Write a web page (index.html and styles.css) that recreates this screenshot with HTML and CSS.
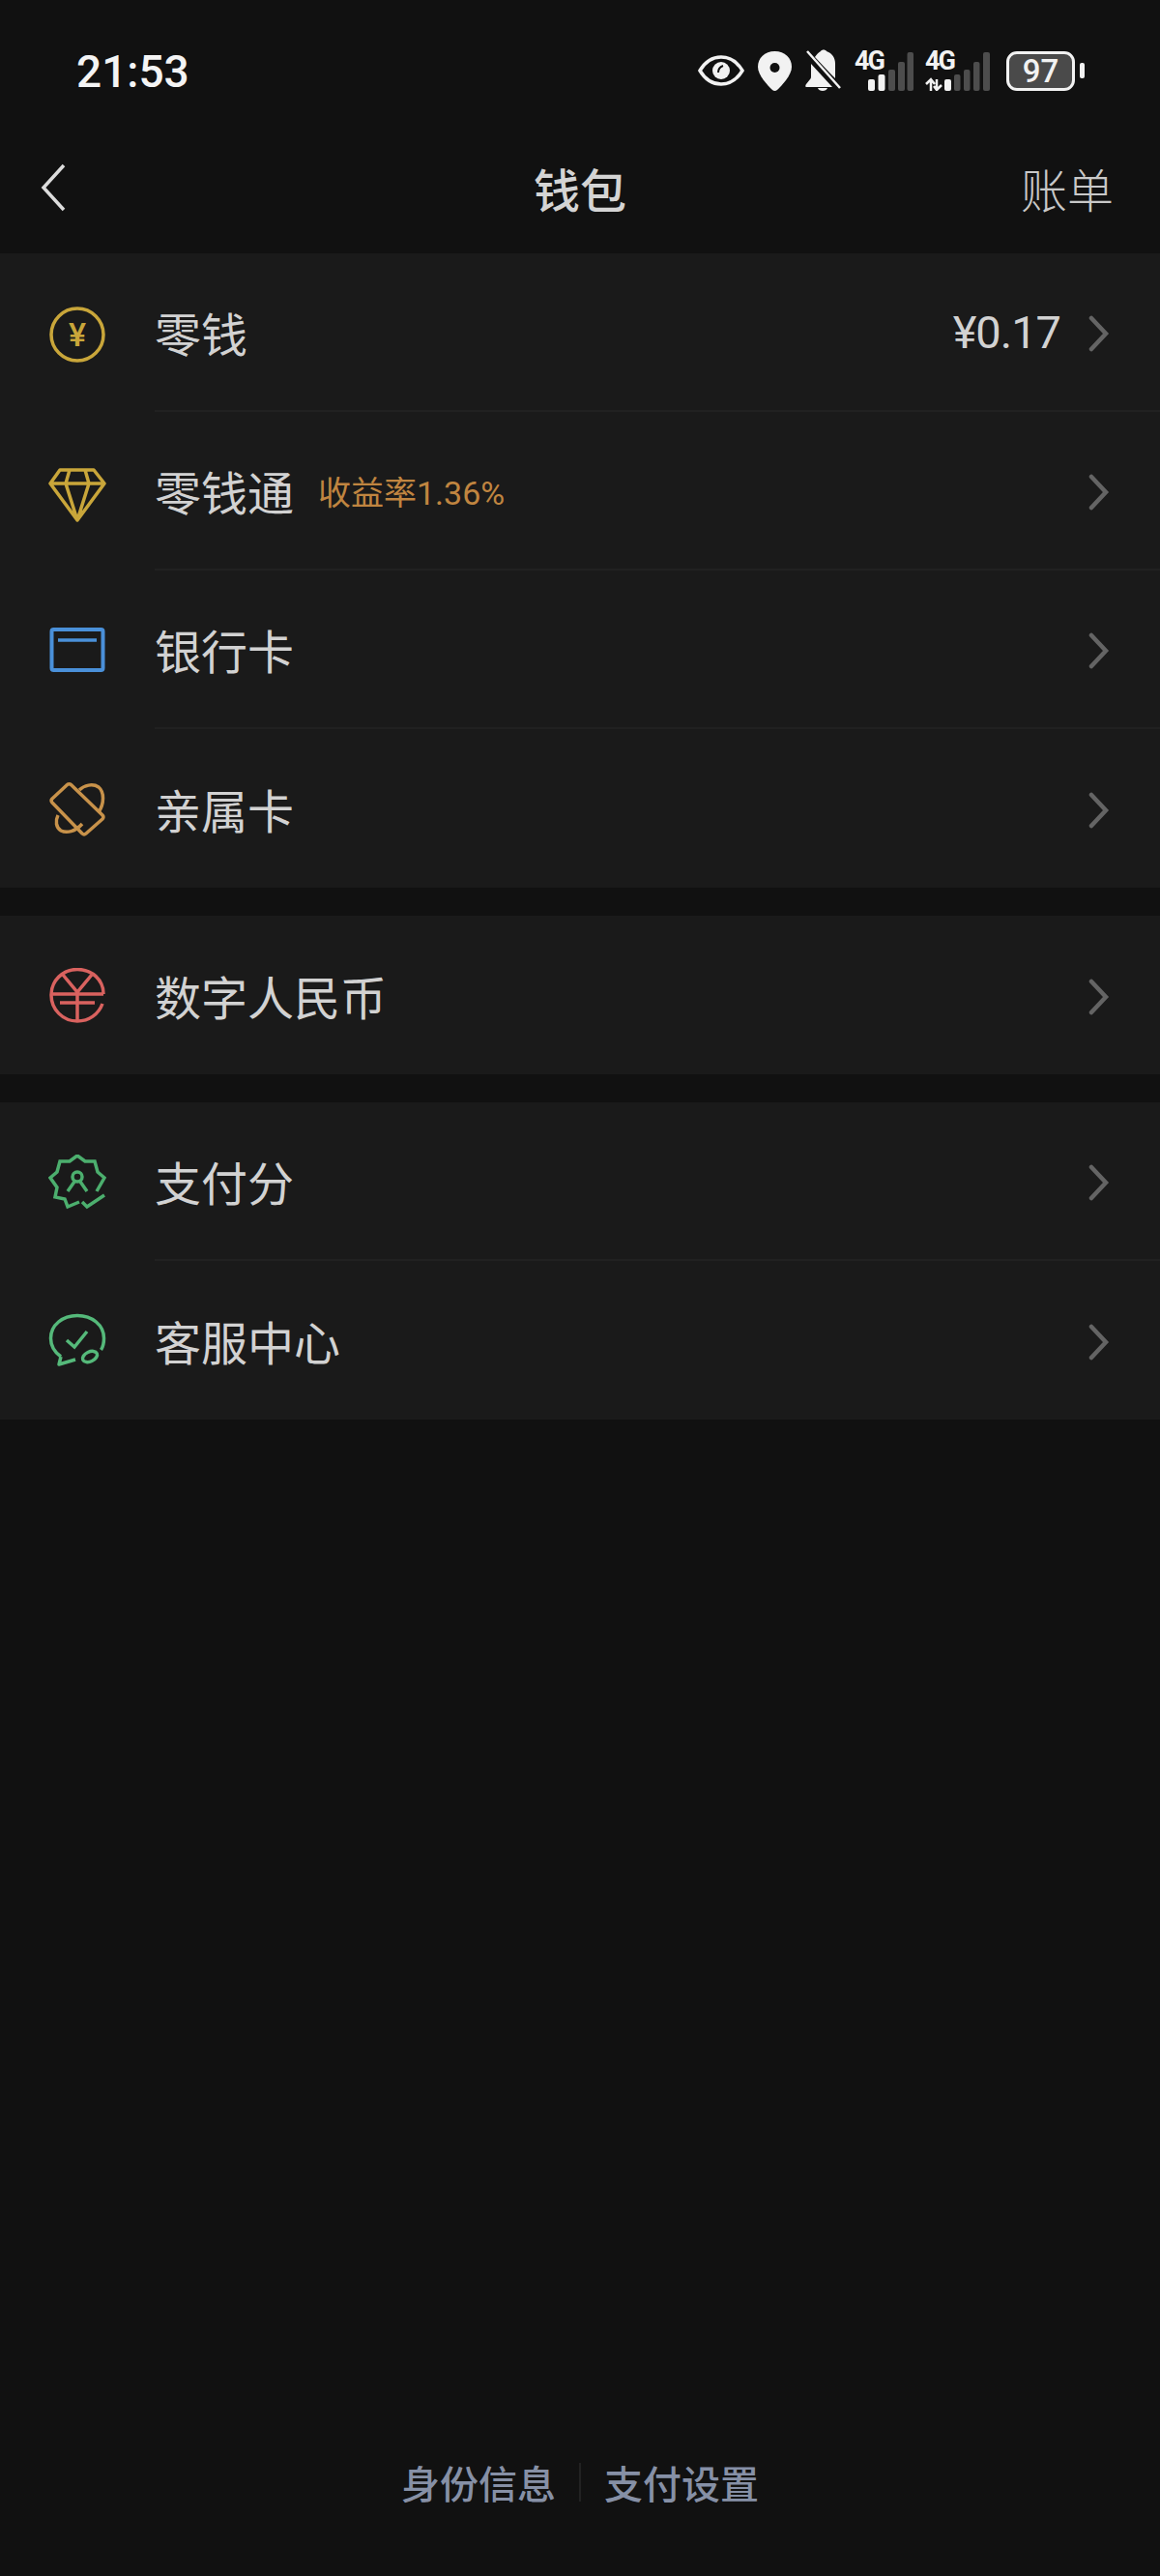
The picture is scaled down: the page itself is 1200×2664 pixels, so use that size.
FILE: index.html
```html
<!DOCTYPE html>
<html lang="zh-CN">
<head>
  <meta charset="UTF-8">
  <title>钱包</title>
  <link rel="stylesheet" href="styles.css">
</head>
<body>
  <div class="page">
    <div class="status-bar">
      <span class="time">21:53</span>
      <div class="status-icons">
        <svg width="48" height="32" viewBox="0 0 48 32"><path d="M2 16C8 6 16 2 24 2s16 4 22 14c-6 10-14 14-22 14S8 26 2 16z" fill="none" stroke="#f2f2f2" stroke-width="3.500"/><circle cx="24" cy="16" r="9" fill="#f2f2f2"/><path d="M21 18c0-4 2-6 5-7" fill="none" stroke="#111" stroke-width="2"/></svg>
        <svg width="35" height="41" viewBox="0 0 35 41"><path d="M17.500 0C7 0 0 7 0 16c0 9 10 19 15 24 1.500 1.300 3.500 1.300 5 0 5-5 15-15 15-24C35 7 28 0 17.500 0z" fill="#f2f2f2"/><circle cx="17.500" cy="17" r="5" fill="#111"/></svg>
        <svg width="37" height="44" viewBox="0 0 37 44"><path d="M16 2c1-2 5-2 6 0 6 2 9 7 9 13v15l-6-6L10 8c2-3 4-5 6-6zM6 15l22 24H1c-1 0-1-2 0-3l4-5c1-1 1-2 1-4zM13 40h10c-1 4-9 4-10 0z" fill="#f2f2f2"/><path d="M2 2l34 38" stroke="#f2f2f2" stroke-width="2.500"/></svg>
        <div class="signal">
          <span class="net-label">4G</span>
          <svg width="61" height="41" viewBox="0 0 61 41"><rect x="14" y="29" width="7" height="12" rx="2" fill="#f2f2f2"/><rect x="24.500" y="24" width="7" height="17" rx="2" fill="#f2f2f2"/><rect x="35" y="19" width="7" height="22" rx="2" fill="#4d4d4d"/><rect x="45" y="11" width="7" height="30" rx="2" fill="#4d4d4d"/><rect x="54.500" y="1" width="6.500" height="40" rx="2" fill="#4d4d4d"/></svg>
        </div>
        <div class="signal signal-data">
          <span class="net-label">4G</span>
          <svg width="67" height="41" viewBox="0 0 67 41"><path d="M6 41V29M1 34l5-5 4 5M12 29v11M9 36l3 4 5-5" fill="none" stroke="#f2f2f2" stroke-width="2.500"/><rect x="20" y="29" width="7" height="12" rx="2" fill="#f2f2f2"/><rect x="30" y="24" width="6.500" height="17" rx="2" fill="#4d4d4d"/><rect x="40" y="19" width="6.500" height="22" rx="2" fill="#4d4d4d"/><rect x="50" y="11" width="6.500" height="30" rx="2" fill="#4d4d4d"/><rect x="60" y="1" width="7" height="40" rx="2" fill="#4d4d4d"/></svg>
        </div>
        <div class="battery">
          <span class="battery-level">97</span>
          <span class="battery-cap"></span>
        </div>
      </div>
    </div>

    <div class="nav-bar">
      <svg class="back" width="26" height="50" viewBox="0 0 26 50"><path d="M24 2L3 25l21 23" fill="none" stroke="#dcdcdc" stroke-width="3.500"/></svg>
      <span class="nav-title">钱包</span>
      <span class="nav-action">账单</span>
    </div>

    <div class="group">
      <div class="row">
        <svg class="row-icon" viewBox="0 0 60 60"><circle cx="30" cy="30" r="27" fill="none" stroke="#c9a63a" stroke-width="3.500"/><text class="yen" x="30" y="42" text-anchor="middle">¥</text></svg>
        <div class="row-main"><span class="row-label">零钱</span><span class="row-value">¥0.17</span><svg class="chevron" viewBox="0 0 22 38"><path d="M3 3l15 16L3 35" fill="none" stroke="#646464" stroke-width="4.500" stroke-linecap="round"/></svg></div>
      </div>
      <div class="row">
        <svg class="row-icon" viewBox="0 0 60 60"><path d="M12 6h35l11 14-28 38L2 20zM2 20h56M22 6l-4 14 12 38 12-38-4-14" fill="none" stroke="#c9a63a" stroke-width="3.500" stroke-linejoin="round"/></svg>
        <div class="row-main"><span class="row-label">零钱通</span><span class="row-note">收益率1.36%</span><svg class="chevron" viewBox="0 0 22 38"><path d="M3 3l15 16L3 35" fill="none" stroke="#646464" stroke-width="4.500" stroke-linecap="round"/></svg></div>
      </div>
      <div class="row">
        <svg class="row-icon" viewBox="0 0 60 60"><rect x="3.500" y="7" width="53" height="42" rx="2" fill="none" stroke="#4a90d9" stroke-width="4"/><path d="M10 18h40" stroke="#4a90d9" stroke-width="3.500"/></svg>
        <div class="row-main"><span class="row-label">银行卡</span><svg class="chevron" viewBox="0 0 22 38"><path d="M3 3l15 16L3 35" fill="none" stroke="#646464" stroke-width="4.500" stroke-linecap="round"/></svg></div>
      </div>
      <div class="row">
        <svg class="row-icon" viewBox="0 0 60 60"><path d="M19 4a3 3 0 0 1 5 0l32 31a3 3 0 0 1 0 4L39 54a3 3 0 0 1-4 0L4 22a3 3 0 0 1 0-4z" fill="none" stroke="#c8924a" stroke-width="3.500" stroke-linejoin="round"/><path d="M32 9c5-5 14-7 20-3 6 5 6 17 0 26M10 35c-3 6-2 13 3 16 6 3 15 1 22-7" fill="none" stroke="#c8924a" stroke-width="3.500"/></svg>
        <div class="row-main"><span class="row-label">亲属卡</span><svg class="chevron" viewBox="0 0 22 38"><path d="M3 3l15 16L3 35" fill="none" stroke="#646464" stroke-width="4.500" stroke-linecap="round"/></svg></div>
      </div>
    </div>

    <div class="group">
      <div class="row">
        <svg class="row-icon" viewBox="0 0 60 60"><path d="M57 27C57 12 45 1.500 30 1.500S3 13 3 28s12 27 27 27c12 0 22-7 26-18" fill="none" stroke="#d9625f" stroke-width="3.500"/><path d="M15 7l15 18L45 7M3 27h54M12 36h36M30 25v30" fill="none" stroke="#d9625f" stroke-width="3.500"/></svg>
        <div class="row-main"><span class="row-label">数字人民币</span><svg class="chevron" viewBox="0 0 22 38"><path d="M3 3l15 16L3 35" fill="none" stroke="#646464" stroke-width="4.500" stroke-linecap="round"/></svg></div>
      </div>
    </div>

    <div class="group">
      <div class="row">
        <svg class="row-icon" viewBox="0 0 60 60"><path d="M50 38l8-14-7-6-3-11H38L30 1l-8 6H12L9 18 2 24l7 10-2 10 10 2 3 8 12-5" fill="none" stroke="#4caf6e" stroke-width="3.500"/><circle cx="30" cy="23" r="5" fill="none" stroke="#4caf6e" stroke-width="3.500"/><path d="M20 38l7-10M40 38l-7-10M35 49l5 5 18-12" fill="none" stroke="#4caf6e" stroke-width="3.500"/></svg>
        <div class="row-main"><span class="row-label">支付分</span><svg class="chevron" viewBox="0 0 22 38"><path d="M3 3l15 16L3 35" fill="none" stroke="#646464" stroke-width="4.500" stroke-linecap="round"/></svg></div>
      </div>
      <div class="row">
        <svg class="row-icon" viewBox="0 0 60 60"><path d="M13 45C6 40 2.500 33 2.500 26 2.500 12 15 2.500 30 2.500S57.500 12 57.500 26c0 5-1 9-3 12M13 45l-2 8 17-5" fill="none" stroke="#55b97a" stroke-width="3.500" stroke-linejoin="round"/><ellipse cx="43" cy="45" rx="8" ry="5" transform="rotate(-25 43 45)" fill="none" stroke="#55b97a" stroke-width="3.500"/><path d="M19 28l8 7 13-16" fill="none" stroke="#55b97a" stroke-width="3.500"/></svg>
        <div class="row-main"><span class="row-label">客服中心</span><svg class="chevron" viewBox="0 0 22 38"><path d="M3 3l15 16L3 35" fill="none" stroke="#646464" stroke-width="4.500" stroke-linecap="round"/></svg></div>
      </div>
    </div>

    <div class="footer">
      <span class="footer-link">身份信息</span>
      <span class="footer-sep"></span>
      <span class="footer-link">支付设置</span>
    </div>
  </div>
</body>
</html>
```

FILE: styles.css
```css
* {
  box-sizing: border-box;
}
body {
  margin: 0;
  background: #111111;
  font-family: "Noto Sans CJK SC", "Noto Sans", sans-serif;
}
.page {
  height: 2664px;
  display: flex;
  flex-direction: column;
  overflow: hidden;
}
.status-bar {
  height: 130px;
  padding: 18px 78px 0 79px;
  display: flex;
  justify-content: space-between;
  align-items: center;
}
.time {
  font-family: Roboto, sans-serif;
  font-size: 46px;
  font-weight: 500;
  letter-spacing: 0;
  color: #f4f4f4;
}
.status-icons {
  display: flex;
  align-items: center;
  gap: 14px;
  margin-top: -2px;
}
.signal {
  position: relative;
  height: 41px;
}
.signal svg {
  display: block;
}
.signal-data {
  margin-left: -2px;
}
.net-label {
  position: absolute;
  left: 0;
  top: -3px;
  font-family: Roboto, sans-serif;
  font-size: 27px;
  line-height: 27px;
  font-weight: 700;
  letter-spacing: -2px;
  color: #f2f2f2;
}
.battery {
  margin-left: 3px;
  display: flex;
  align-items: center;
  gap: 5px;
}
.battery-level {
  width: 71px;
  height: 41px;
  border: 3px solid #f2f2f2;
  border-radius: 11px;
  background: #4a4a4a;
  text-align: center;
  font-family: Roboto, sans-serif;
  font-size: 33px;
  line-height: 35px;
  font-weight: 500;
  color: #f2f2f2;
}
.battery-cap {
  width: 5px;
  height: 16px;
  border-radius: 2px;
  background: #f2f2f2;
}
.nav-bar {
  height: 132px;
  padding: 0 48px 5px 42px;
  display: flex;
  justify-content: space-between;
  align-items: center;
  position: relative;
}
.nav-title {
  position: absolute;
  left: 0;
  right: 0;
  text-align: center;
  font-size: 48px;
  font-weight: 500;
  color: #d4d4d4;
}
.nav-action {
  font-size: 48px;
  color: #c8c8c8;
  font-weight: 300;
}
.group {
  background: #1a1a1a;
  margin-bottom: 29px;
}
.row {
  height: 164px;
  padding-left: 50px;
  display: flex;
  align-items: center;
}
.row-icon {
  width: 60px;
  height: 60px;
  flex-shrink: 0;
  margin-top: 4px;
  margin-right: 50px;
}
.row-main {
  flex: 1;
  height: 100%;
  padding-right: 52px;
  display: flex;
  align-items: center;
  border-bottom: 2px solid #212121;
}
.row:last-child .row-main {
  border-bottom: none;
}
.row-label {
  font-size: 48px;
  color: #d2d2d2;
}
.row-note {
  margin-left: 25px;
  font-family: Roboto, "Noto Sans CJK SC", sans-serif;
  font-size: 34px;
  color: #c08540;
}
.row-value {
  margin-left: auto;
  font-family: Roboto, sans-serif;
  font-size: 47px;
  letter-spacing: -1px;
  color: #d2d2d2;
}
.chevron {
  width: 22px;
  height: 38px;
  margin-top: 3px;
  margin-left: auto;
}
.row-value + .chevron {
  margin-left: 29px;
}
.yen {
  font-family: Roboto, sans-serif;
  font-size: 34px;
  font-weight: 500;
  fill: #c9a63a;
}
.footer {
  margin-top: auto;
  padding-bottom: 69px;
  display: flex;
  justify-content: center;
  align-items: center;
  gap: 24px;
}
.footer-link {
  font-size: 40px;
  line-height: 56px;
  font-weight: 500;
  color: #8690a6;
}
.footer-sep {
  width: 2px;
  height: 40px;
  background: #222222;
}
```
